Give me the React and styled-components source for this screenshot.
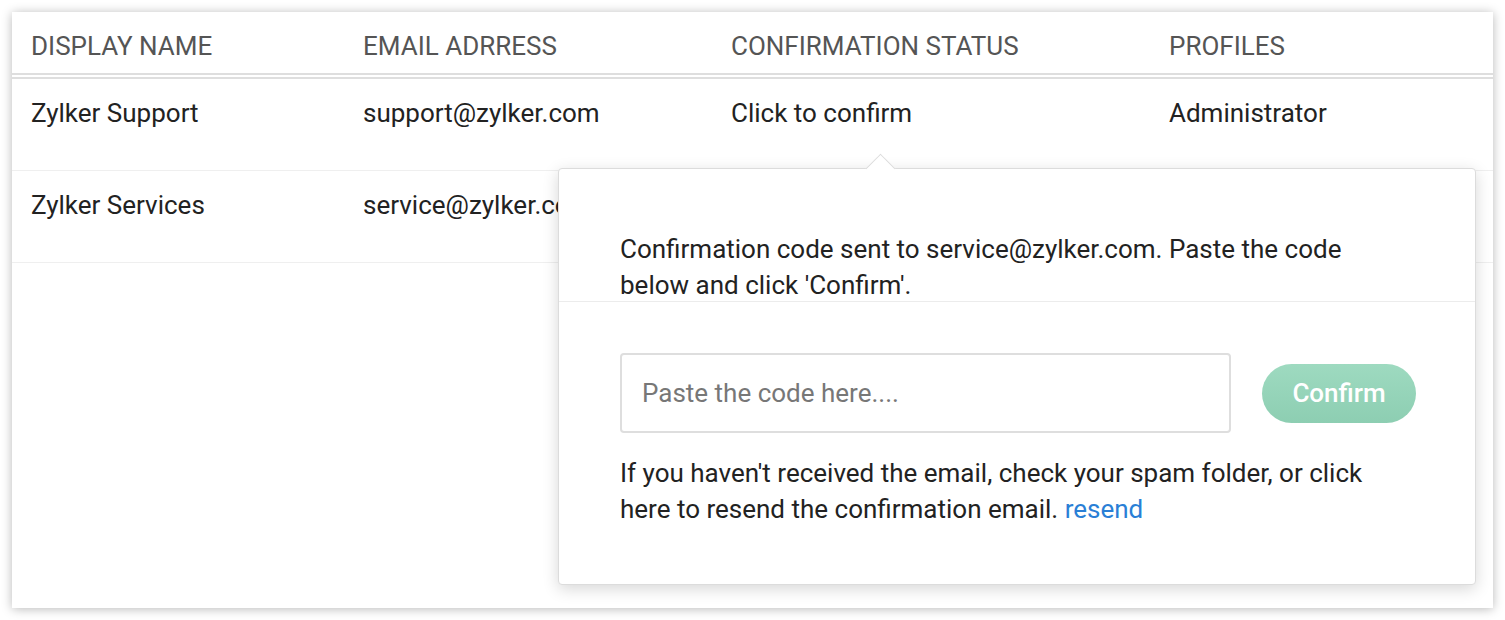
import styled, { createGlobalStyle } from "styled-components"

const Global = createGlobalStyle`
  body {
    margin: 0;
    background: #fff;
    font-family: Roboto, "Liberation Sans", sans-serif;
  }
`

const Page = styled.div`
  padding: 12px;
  width: 1505px;
  height: 620px;
  box-sizing: border-box;
`

const Card = styled.div`
  position: relative;
  width: 1481px;
  height: 596px;
  background: #fff;
  box-shadow: 0 1px 10px rgba(0, 0, 0, 0.28);
`

const Row = styled.div`
  display: grid;
  grid-template-columns: 332px 368px 438px 1fr;
  padding-left: 19px;
  box-sizing: border-box;
  height: ${(p) => (p.head ? "67px" : "92px")};
  padding-top: ${(p) => (p.head ? "19px" : "19px")};
  border-bottom: ${(p) => (p.head ? "6px double #dedede" : "1px solid #efefef")};
  color: ${(p) => (p.head ? "#555" : "#222")};
  font-size: 26px;
  line-height: 30px;
`

const Cell = styled.div`
  white-space: nowrap;
`

const Popover = styled.div`
  position: absolute;
  left: 546px;
  top: 156px;
  width: 918px;
  height: 417px;
  box-sizing: border-box;
  background: #fff;
  border: 1px solid #dcdcdc;
  border-radius: 4px;
  box-shadow: 0 4px 16px rgba(0, 0, 0, 0.16);
  color: #222;
  font-size: 26px;
  line-height: 36px;
`

const Arrow = styled.div`
  position: absolute;
  left: 311px;
  top: -11px;
  width: 20px;
  height: 20px;
  background: #fff;
  border-top: 1px solid #dcdcdc;
  border-left: 1px solid #dcdcdc;
  transform: rotate(45deg);
`

const Top = styled.div`
  height: 133px;
  box-sizing: border-box;
  padding: 62px 100px 0 61px;
  overflow: hidden;
  border-bottom: 1px solid #ececec;
`

const Bottom = styled.div`
  padding: 51px 100px 0 61px;
`

const Form = styled.div`
  display: flex;
  align-items: center;
  gap: 31px;
`

const Input = styled.input`
  width: 611px;
  height: 80px;
  flex: none;
  box-sizing: border-box;
  border: 2px solid #dedede;
  border-radius: 4px;
  padding: 0 20px;
  font-family: inherit;
  font-size: 26px;
  color: #222;
  outline: none;
  &::placeholder {
    color: #777;
  }
`

const Button = styled.button`
  flex: none;
  width: 154px;
  height: 59px;
  border: none;
  border-radius: 30px;
  background: linear-gradient(180deg, #9edac0 0%, #8dceb2 100%);
  color: #fff;
  font-family: inherit;
  font-size: 26px;
  font-weight: 500;
  cursor: pointer;
`

const Note = styled.p`
  margin: 22px 0 0;
`

const Link = styled.a`
  color: #2a7fd6;
  text-decoration: none;
`

const rows = [
  ["Zylker Support", "support@zylker.com", "Click to confirm", "Administrator"],
  ["Zylker Services", "service@zylker.com", "", ""],
]

export default function App() {
  return (
    <Page>
      <Global />
      <Card>
        <Row head>
          <Cell>DISPLAY NAME</Cell>
          <Cell>EMAIL ADRRESS</Cell>
          <Cell>CONFIRMATION STATUS</Cell>
          <Cell>PROFILES</Cell>
        </Row>
        {rows.map((r) => (
          <Row key={r[0]}>
            {r.map((c, i) => (
              <Cell key={i}>{c}</Cell>
            ))}
          </Row>
        ))}
        <Popover>
          <Arrow />
          <Top>
            Confirmation code sent to service@zylker.com. Paste the code below and click 'Confirm'.
          </Top>
          <Bottom>
            <Form>
              <Input placeholder="Paste the code here...." />
              <Button>Confirm</Button>
            </Form>
            <Note>
              If you haven't received the email, check your spam folder, or click here to resend the
              confirmation email. <Link href="#">resend</Link>
            </Note>
          </Bottom>
        </Popover>
      </Card>
    </Page>
  )
}
